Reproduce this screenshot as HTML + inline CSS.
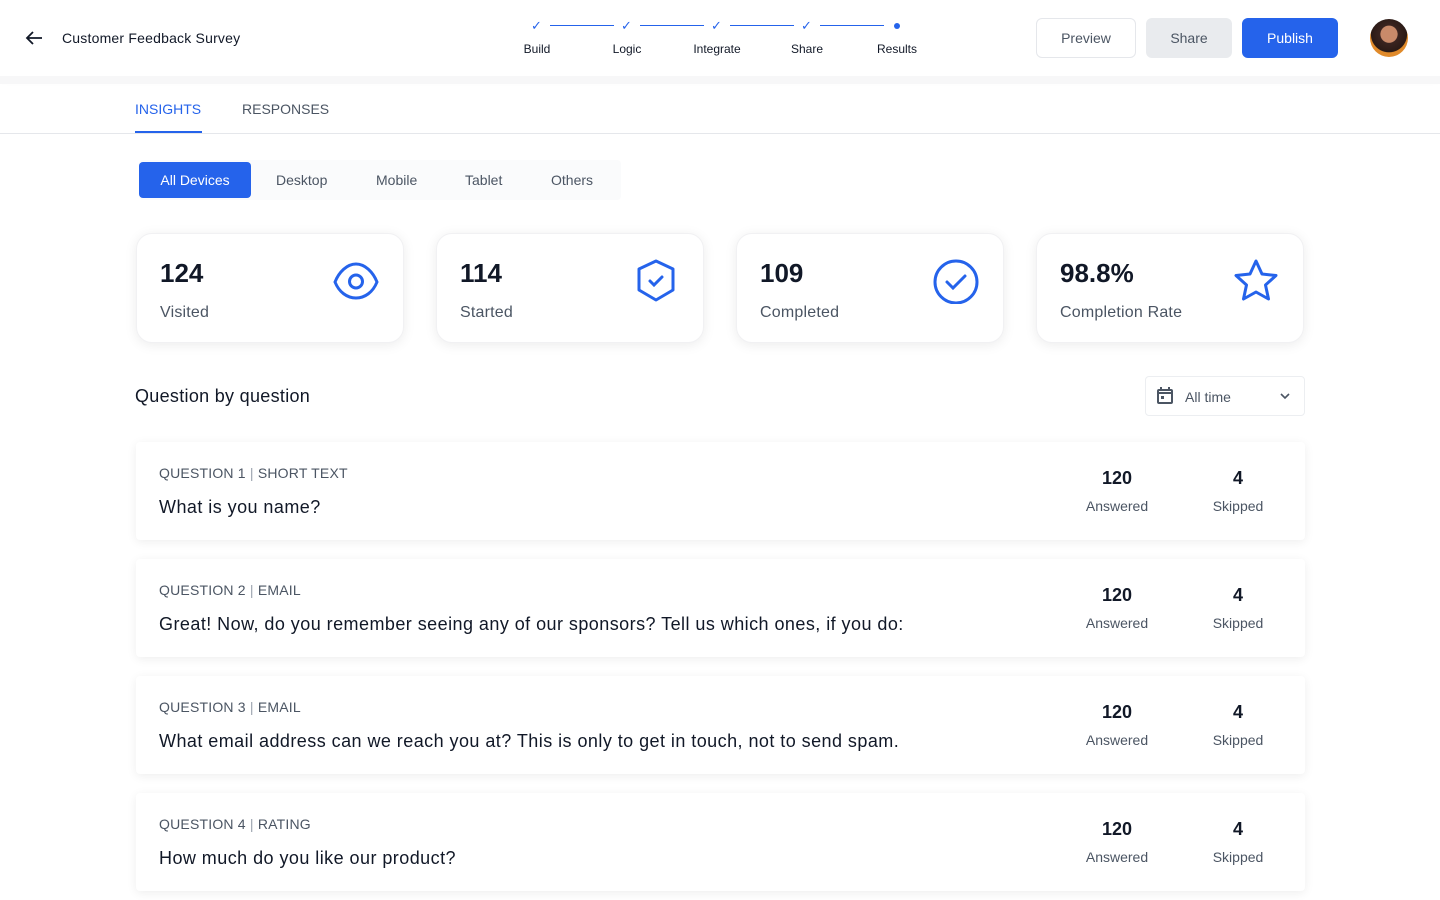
<!DOCTYPE html>
<html><head><style>
*{box-sizing:border-box;margin:0;padding:0}
body{width:1440px;height:900px;overflow:hidden;background:#fff;font-family:"Liberation Sans",sans-serif;color:#111827;position:relative}
.abs{position:absolute}
.hdr{left:0;top:0;width:1440px;height:76px;background:#fff;box-shadow:0 4px 8px rgba(0,0,0,.04)}
.band{left:0;top:76px;width:1440px;height:8px;background:#f7f7f8}
.step{position:absolute;top:42px;font-size:12px;color:#111827;width:60px;text-align:center}
.ln{position:absolute;top:25px;height:1px;background:#2563eb;width:64px}
.ck{position:absolute;top:18px;color:#2563eb;font-size:13px}
.btn{position:absolute;top:18px;height:40px;border-radius:6px;font-size:14px;display:flex;align-items:center;justify-content:center}
.card{position:absolute;top:233px;width:268px;height:110px;border-radius:16px;background:#fff;box-shadow:0 2px 12px rgba(0,0,0,.08);border:1px solid #f1f1f3}
.card .n{position:absolute;left:23px;top:24px;font-size:26px;font-weight:bold;color:#111827}
.card .l{position:absolute;left:23px;top:70px;font-size:16px;color:#4b5563;letter-spacing:.2px}
.card svg{position:absolute;right:24px;top:24px}
.q{position:absolute;left:136px;width:1169px;height:98px;background:#fff;box-shadow:0 2px 10px rgba(0,0,0,.07);border-radius:4px}
.q .t{position:absolute;left:23px;top:23px;font-size:14px;color:#4b5563;letter-spacing:.2px}
.q .s{position:absolute;left:23px;top:55px;font-size:18px;color:#111827;letter-spacing:.45px}
.q .v{position:absolute;top:26px;width:100px;text-align:center;font-size:18px;font-weight:bold}
.q .k{position:absolute;top:56px;width:100px;text-align:center;font-size:14px;color:#4b5563}
</style></head><body>
<div class="abs hdr"></div>
<div class="abs band"></div>
<svg class="abs" style="left:24px;top:29px" width="20" height="18" viewBox="0 0 20 18"><path d="M18 9H3M9 3L3 9l6 6" stroke="#111827" stroke-width="1.8" fill="none"/></svg>
<div class="abs" style="left:62px;top:30px;font-size:14px;color:#111827;letter-spacing:.2px">Customer Feedback Survey</div>
<span class="ck" style="left:531px">✓</span><div class="ln" style="left:550px"></div>
<span class="ck" style="left:621px">✓</span><div class="ln" style="left:640px"></div>
<span class="ck" style="left:711px">✓</span><div class="ln" style="left:730px"></div>
<span class="ck" style="left:801px">✓</span><div class="ln" style="left:820px"></div>
<div class="abs" style="left:894px;top:23px;width:6px;height:6px;border-radius:50%;background:#2563eb"></div>
<div class="step" style="left:507px">Build</div>
<div class="step" style="left:597px">Logic</div>
<div class="step" style="left:687px">Integrate</div>
<div class="step" style="left:777px">Share</div>
<div class="step" style="left:867px">Results</div>
<div class="btn" style="left:1036px;width:100px;border:1px solid #e5e7eb;color:#4b5563">Preview</div>
<div class="btn" style="left:1146px;width:86px;background:#e9ebee;color:#4b5563">Share</div>
<div class="btn" style="left:1242px;width:96px;background:#2563eb;color:#fff">Publish</div>
<div class="abs" style="left:1370px;top:19px;width:38px;height:38px;border-radius:50%;background:radial-gradient(circle at 50% 40%,#c98a6a 0 28%,#3a2420 30%,#2a1a16 60%,#e08a2a 62%)"></div>
<div class="abs" style="left:135px;top:101px;font-size:14px;color:#2563eb">INSIGHTS</div>
<div class="abs" style="left:135px;top:131px;width:67px;height:2px;background:#2563eb"></div>
<div class="abs" style="left:242px;top:101px;font-size:14px;color:#4b5563">RESPONSES</div>
<div class="abs" style="left:0;top:133px;width:1440px;height:1px;background:#e5e7eb"></div>
<div class="abs" style="left:139px;top:160px;width:482px;height:40px;background:#fafbfc;border-radius:4px"></div>
<div class="abs" style="left:139px;top:162px;width:112px;height:36px;background:#2563eb;border-radius:4px;color:#fff;font-size:14px;display:flex;align-items:center;justify-content:center">All Devices</div>
<div class="abs" style="left:276px;top:172px;font-size:14px;color:#4b5563">Desktop</div>
<div class="abs" style="left:376px;top:172px;font-size:14px;color:#4b5563">Mobile</div>
<div class="abs" style="left:465px;top:172px;font-size:14px;color:#4b5563">Tablet</div>
<div class="abs" style="left:551px;top:172px;font-size:14px;color:#4b5563">Others</div>
<div class="card" style="left:136px"><div class="n">124</div><div class="l">Visited</div><svg width="46" height="46" viewBox="0 0 46 46"><path d="M2 24C6 14 14 6 23 6s17 8 21 18c-4 10-12 16-21 16S6 34 2 24z" stroke="#2563eb" stroke-width="3" fill="none"/><circle cx="23" cy="23.5" r="6.5" stroke="#2563eb" stroke-width="3" fill="none"/></svg></div>
<div class="card" style="left:436px"><div class="n">114</div><div class="l">Started</div><svg width="46" height="46" viewBox="0 0 46 46"><path d="M23 3l17 8v21l-17 10L6 32V11z" stroke="#2563eb" stroke-width="3" fill="none" stroke-linejoin="round"/><path d="M17 23l4 4 8-8" stroke="#2563eb" stroke-width="3" fill="none" stroke-linecap="round"/></svg></div>
<div class="card" style="left:736px"><div class="n">109</div><div class="l">Completed</div><svg width="46" height="46" viewBox="0 0 46 46"><circle cx="23" cy="24" r="21" stroke="#2563eb" stroke-width="3" fill="none"/><path d="M14 24l6 6 12-12" stroke="#2563eb" stroke-width="3" fill="none" stroke-linecap="round"/></svg></div>
<div class="card" style="left:1036px"><div class="n">98.8%</div><div class="l">Completion Rate</div><svg width="46" height="46" viewBox="0 0 46 46"><path d="M23 3l6 13 14 1.5-10.5 9.5 3 14L23 34l-12.5 7 3-14L3 17.5 17 16z" stroke="#2563eb" stroke-width="3" fill="none" stroke-linejoin="round"/></svg></div>
<div class="abs" style="left:135px;top:386px;font-size:18px;color:#111827;letter-spacing:.3px">Question by question</div>
<div class="abs" style="left:1145px;top:376px;width:160px;height:40px;border:1px solid #eceef1;border-radius:4px"></div>
<svg class="abs" style="left:1157px;top:387px" width="16" height="17" viewBox="0 0 16 17"><rect x="1" y="3" width="14" height="13" rx="1" stroke="#4b5563" stroke-width="2" fill="none"/><path d="M1 6h14M4 0v4M12 0v4" stroke="#4b5563" stroke-width="2"/><rect x="4" y="9" width="3" height="3" fill="#4b5563"/></svg>
<div class="abs" style="left:1185px;top:389px;font-size:14px;color:#4b5563">All time</div>
<svg class="abs" style="left:1280px;top:393px" width="10" height="7" viewBox="0 0 10 7"><path d="M1 1l4 4 4-4" stroke="#4b5563" stroke-width="1.6" fill="none"/></svg>

<div class="q" style="top:442px"><div class="t">QUESTION 1 <span style="color:#9ca3af">|</span> SHORT TEXT</div><div class="s">What is you name?</div><div class="v" style="left:931px">120</div><div class="k" style="left:931px">Answered</div><div class="v" style="left:1052px">4</div><div class="k" style="left:1052px">Skipped</div></div>
<div class="q" style="top:559px"><div class="t">QUESTION 2 <span style="color:#9ca3af">|</span> EMAIL</div><div class="s">Great! Now, do you remember seeing any of our sponsors? Tell us which ones, if you do:</div><div class="v" style="left:931px">120</div><div class="k" style="left:931px">Answered</div><div class="v" style="left:1052px">4</div><div class="k" style="left:1052px">Skipped</div></div>
<div class="q" style="top:676px"><div class="t">QUESTION 3 <span style="color:#9ca3af">|</span> EMAIL</div><div class="s">What email address can we reach you at? This is only to get in touch, not to send spam.</div><div class="v" style="left:931px">120</div><div class="k" style="left:931px">Answered</div><div class="v" style="left:1052px">4</div><div class="k" style="left:1052px">Skipped</div></div>
<div class="q" style="top:793px"><div class="t">QUESTION 4 <span style="color:#9ca3af">|</span> RATING</div><div class="s">How much do you like our product?</div><div class="v" style="left:931px">120</div><div class="k" style="left:931px">Answered</div><div class="v" style="left:1052px">4</div><div class="k" style="left:1052px">Skipped</div></div>
</body></html>
